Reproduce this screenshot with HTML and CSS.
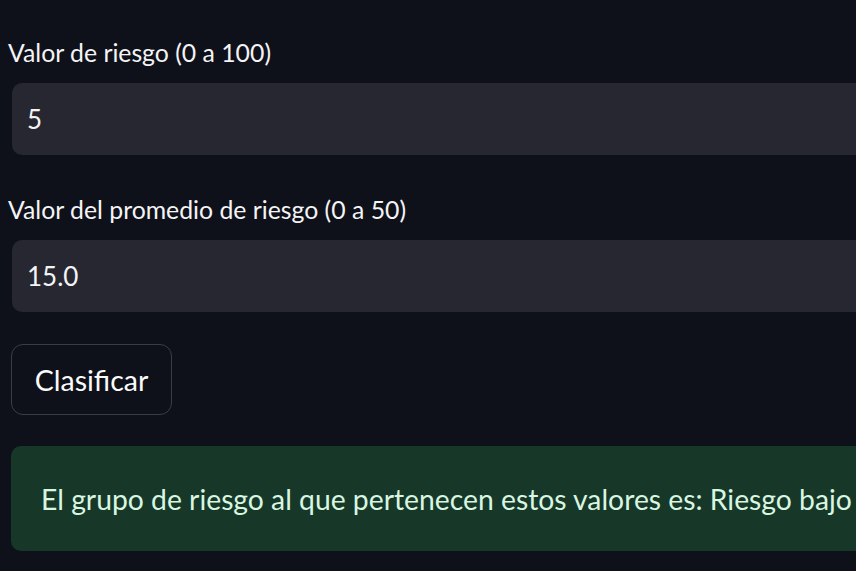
FILE: index.html
```html
<!DOCTYPE html>
<html lang="es">
<head>
<meta charset="utf-8">
<link rel="stylesheet" href="styles.css">
<title>Clasificador</title>
</head>
<body>
<main class="page">
  <div class="field first">
    <label class="label">Valor de riesgo (0 a 100)</label>
    <div class="input">5</div>
  </div>
  <div class="field second">
    <label class="label">Valor del promedio de riesgo (0 a 50)</label>
    <div class="input">15.0</div>
  </div>
  <button class="btn">Clasificar</button>
  <div class="success">El grupo de riesgo al que pertenecen estos valores es: Riesgo bajo</div>
</main>
</body>
</html>
```
FILE: styles.css
```css
html, body {
  margin: 0;
  padding: 0;
  background: #0f111a;
  overflow: hidden;
  height: 100%;
}
.page {
  width: 856px;
  box-sizing: border-box;
  overflow: hidden;
  padding: 35px 0 0 11px;
  font-family: Lato, "Noto Sans", sans-serif;
  color: #fafafa;
  display: flex;
  flex-direction: column;
  align-items: flex-start;
}
.field {
  align-self: stretch;
  margin-right: -40px;
  display: flex;
  flex-direction: column;
}
.field.second {
  margin-top: 37px;
}
.label {
  display: block;
  height: 36px;
  line-height: 36px;
  font-size: 24.8px;
  margin-left: -3px;
  margin-bottom: 12px;
  color: #f4f4f6;
}
.input {
  height: 72px;
  margin-left: 1px;
  background: #262730;
  border-radius: 10px;
  display: flex;
  align-items: center;
  padding-left: 15px;
  font-size: 26px;
  color: #f4f4f6;
}
.btn {
  margin-top: 32px;
  width: 161px;
  height: 71px;
  border: 1.5px solid #3a3c47;
  border-radius: 12px;
  background: #0f111a;
  color: #fafafa;
  font-family: Lato, "Noto Sans", sans-serif;
  font-size: 28.5px;
  padding: 0;
}
.success {
  margin-top: 31px;
  align-self: stretch;
  margin-right: -40px;
  height: 105px;
  box-sizing: border-box;
  background: #173828;
  border-radius: 10px;
  display: flex;
  align-items: center;
  padding-left: 30px;
  font-size: 28.3px;
  color: #d8f6e1;
  white-space: nowrap;
}
```
